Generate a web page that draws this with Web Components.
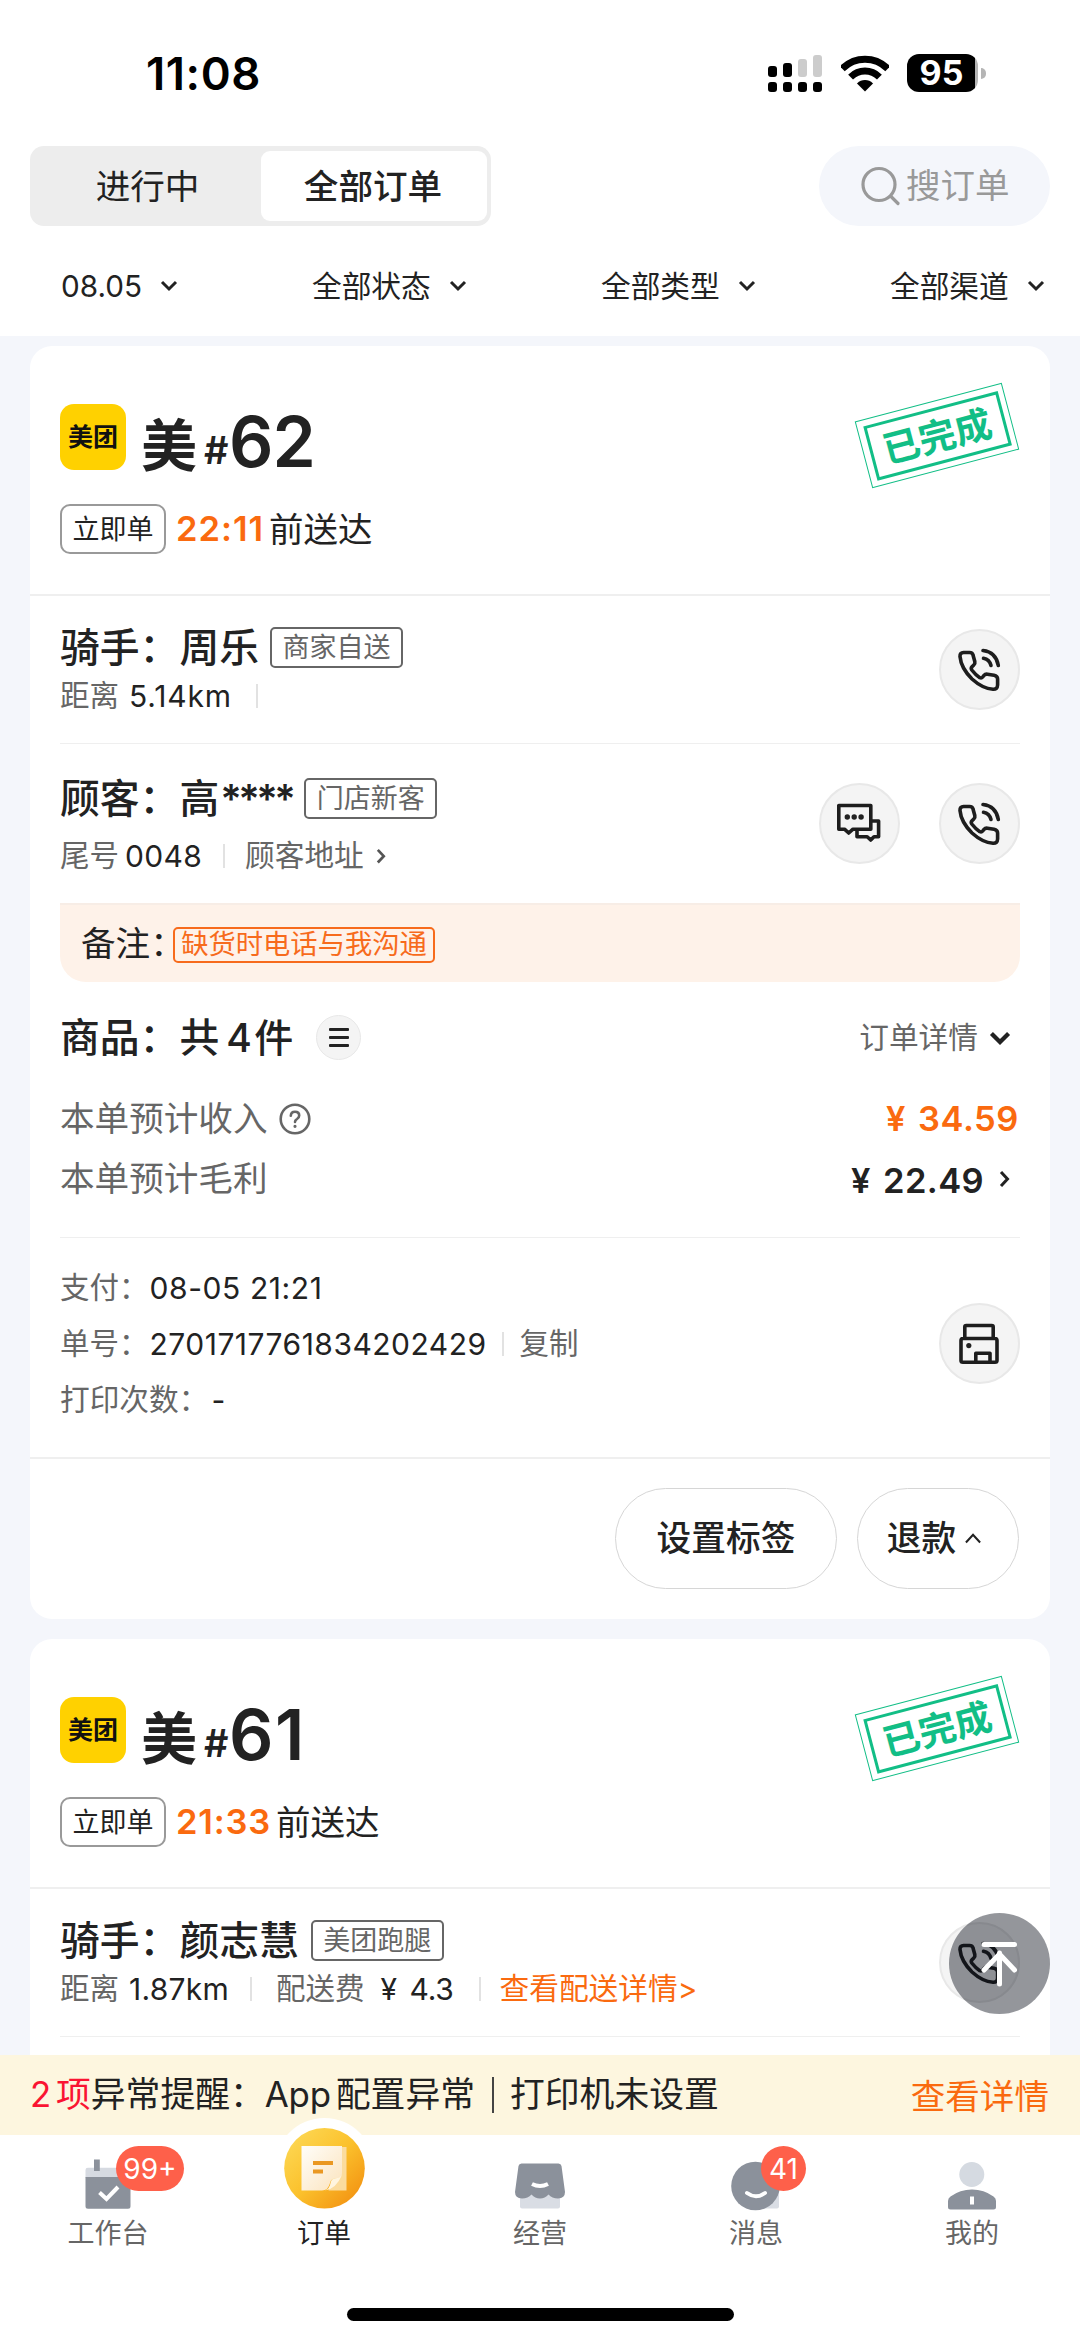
<!DOCTYPE html>
<html lang="zh-CN">
<head>
<meta charset="utf-8">
<title>订单</title>
<style>
html,body{margin:0;padding:0}
body{width:1080px;height:2341px;overflow:hidden;background:#fff;color:#222;font-family:Inter,"Noto Sans CJK SC",sans-serif}
</style>
</head>
<body>
<order-app></order-app>
<script>
const define = (name, html, setup) => customElements.define(name, class extends HTMLElement {
  constructor() {
    super();
    this.attachShadow({ mode: 'open' });
  }
  connectedCallback() {
    if (this.ready) return;
    this.ready = true;
    this.shadowRoot.innerHTML = typeof html === 'function' ? html(this) : html;
    if (setup) setup(this);
  }
});

/* Text run: s = font size, w = run width, x = gap before, c = colour, b = weight, y = baseline nudge */
define('t-x', el => {
  const a = n => el.getAttribute(n);
  return `<style>
  :host{display:block;flex:none;white-space:pre;line-height:1.2;
    ${a('s') ? `font-size:${a('s')}px;` : ''}${a('x') ? `margin-left:${a('x')}px;` : ''}
    ${a('c') ? `color:${a('c')};` : ''}${a('b') ? `font-weight:${a('b')};` : ''}
    ${a('y') ? `margin-top:${a('y')}px;` : ''}${a('w') ? `width:${a('w')}px;` : ''}}
  </style><span><slot></slot></span>`;
}, el => {
  const w = +el.getAttribute('w');
  if (!w) return;
  const span = el.shadowRoot.querySelector('span');
  const n = [...el.textContent].length;
  const natural = span.getBoundingClientRect().width;
  if (natural) span.style.letterSpacing = ((w - natural) / n).toFixed(3) + 'px';
});

define('v-sep', el => `<style>:host{display:block;flex:none;width:2px;height:24px;background:#e2e2e2;margin-left:${el.getAttribute('x') || 0}px}</style>`);

define('chev-icon', el => {
  const d = { down: 'M2 2L9 9L16 2', right: 'M2 2L8.5 9L2 16', up: 'M1 10L8.5 2L16 10' }[el.getAttribute('dir')];
  const w = el.getAttribute('w') || 17, sw = el.getAttribute('sw') || 3;
  const box = el.getAttribute('dir') === 'right' ? [11, 18] : [18, 12];
  return `<style>:host{display:block;flex:none;margin-left:${el.getAttribute('x') || 0}px}svg{display:block}</style>
  <svg width="${w}" height="${w * box[1] / box[0]}" viewBox="0 0 ${box[0]} ${box[1]}" fill="none" stroke="${el.getAttribute('c') || '#222'}" stroke-width="${sw}"><path d="${d}"/></svg>`;
});

define('status-bar', `<style>
:host{display:flex;height:146px;box-sizing:border-box;padding:45px 94px 0 146px;justify-content:space-between;align-items:flex-start;color:#000}
.r{display:flex;align-items:center;height:56px}
svg{display:block}
.bat{margin-left:18px;width:71px;height:38px;border-radius:12px;background:linear-gradient(90deg,#000 68px,#b5b5b5 68px);display:flex;align-items:center;justify-content:center;color:#fff;font-weight:700;font-size:34px;line-height:38px}
.bat span{margin-right:2px}
.nub{width:5px;height:11px;margin-left:3px;background:#b5b5b5;border-radius:0 5px 5px 0}
</style>
<t-x s="45.5" b="600" w="115" y="2">11:08</t-x>
<div class="r">
<svg width="56" height="38" viewBox="0 0 56 38"><g><rect y="12" width="9" height="11" rx="3"/><rect x="15" y="9" width="9" height="14" rx="3"/><rect x="30" y="5" width="9" height="18" rx="3" fill="#ccc"/><rect x="45" y="1" width="9" height="22" rx="3" fill="#ccc"/><rect y="28" width="9" height="10" rx="3"/><rect x="15" y="28" width="9" height="10" rx="3"/><rect x="30" y="28" width="9" height="10" rx="3"/><rect x="45" y="28" width="9" height="10" rx="3"/></g></svg>
<svg style="margin-left:17px" width="48" height="38" viewBox="0 0 48 38"><clipPath id="w"><path d="M24 37.5L-1 12.5V0H49V12.5Z"/></clipPath><g clip-path="url(#w)"><circle cx="24" cy="37" r="31.8" fill="none" stroke="#000" stroke-width="7"/><circle cx="24" cy="37" r="20" fill="none" stroke="#000" stroke-width="7"/><circle cx="24" cy="37" r="11"/></g></svg>
<div class="bat"><span>95</span></div><div class="nub"></div>
</div>`);

define('segment-tabs', `<style>
:host{display:flex;width:461px;height:80px;box-sizing:border-box;background:#ededed;border-radius:14px;padding:5px 4px 5px 0;font-size:34.6px}
div{display:flex;align-items:center;justify-content:center;padding-top:1px;box-sizing:border-box}
.a{width:231px;padding-left:4px}.b{width:226px;background:#fff;border-radius:9px;font-weight:500;padding-right:2px}
</style><div class="a"><slot name="off"></slot></div><div class="b"><slot name="on"></slot></div>`);

define('search-pill', `<style>
:host{display:flex;align-items:center;width:231px;height:80px;box-sizing:border-box;padding-left:42px;border-radius:41px;background:#f4f6fb;color:#999}
svg{display:block}
</style><svg width="40" height="40" viewBox="0 0 40 40" fill="none" stroke="#999" stroke-width="3.2" stroke-linecap="round"><circle cx="18" cy="18.5" r="16"/><path d="M30 30.5L37 37.5"/></svg><t-x s="34.5" x="5"><slot></slot></t-x>`);

define('filter-item', `<style>:host{display:flex;align-items:center}</style><t-x s="29.7"><slot></slot></t-x><chev-icon dir="down" x="18" w="18"></chev-icon>`);

define('tag-box', el => {
  const k = { soft: 'height:50px;padding:0 10.5px;border:2px solid #999;border-radius:10px;color:#222', plain: 'height:41px;padding:0 10.5px;border:2px solid #666;border-radius:5px;color:#666;margin-top:-2px', warn: 'height:36px;padding:0 6px;border:2px solid #f76b1c;border-radius:5px;color:#f76b1c;font-size:27.3px;margin-top:2px' }[el.getAttribute('kind')];
  return `<style>:host{display:flex;flex:none;align-items:center;box-sizing:border-box;font-size:27px;line-height:1;white-space:nowrap;${k};margin-left:${el.getAttribute('x') || 0}px}</style><slot></slot>`;
});

const glyphs = {
  phone: '<path d="M24.5 23.5H30.5Q33.5 23.5 34 26L35.8 32.5Q36.3 34.6 34.8 36L33 37.8Q31.6 39.3 32.8 41Q36.8 46.200 40.8 48.700Q42.5 49.500 43.700 48L45 46.300Q46.200 44.900 48.500 45.200L55 46.200Q58.600 47 58.600 50V56Q58.400 60.600 54 60.300Q43.500 59.500 33 50Q22 39 21 27.500Q20.900 23.500 24.500 23.500Z"/><path d="M44 21.500Q57 23 59.300 36.500M44.500 29.300Q50.500 30.500 52 36.500"/>',
  chat: '<path d="M19.800 22.500H51.800V46.200H34L29.700 50L25.500 46.200H19.800ZM51.800 38H59.600V53.700H55L51.700 57L48.200 53.700H38V46.500"/><g fill="#222" stroke="none"><circle cx="28.300" cy="34" r="2.700"/><circle cx="35.200" cy="34" r="2.700"/><circle cx="42.100" cy="34" r="2.700"/></g>',
  print: '<path d="M25.800 35.500V24Q25.800 22.500 27.300 22.500H52.700Q54.200 22.500 54.200 24V35.500M24 35.500H56Q58 35.500 58 37.500V57.500Q58 59.300 56 59.300H24Q22 59.300 22 57.500V37.500Q22 35.500 24 35.500ZM36.800 59V50.300H51V59"/><circle cx="29.800" cy="42.600" r="2.600" fill="#222" stroke="none"/>'
};
define('round-button', el => `<style>:host{display:block;flex:none;box-sizing:border-box;width:81px;height:81px;border-radius:50%;background:#f4f4f4;border:2px solid #e8e8e8;margin-left:${el.getAttribute('x') || 0}px}svg{display:block;margin:-2px}</style>
<svg width="81" height="81" viewBox="0 0 81 81" fill="none" stroke="#1d1d1d" stroke-width="3.600" stroke-linecap="round" stroke-linejoin="round">${glyphs[el.getAttribute('icon')]}</svg>`);

define('stamp-badge', `<style>
:host{display:block;flex:none;width:152px;height:69px;transform:rotate(-14.75deg);box-sizing:border-box;border:1.500px solid #12be86;padding:5.500px;color:#12be86}
div{box-sizing:border-box;height:100%;border:3px solid #12be86;display:flex;align-items:center;justify-content:center;font-size:37px;font-weight:600;line-height:1;padding-top:1px}
</style><div><slot></slot></div>`);

define('order-card', `<style>
:host{display:block;background:#fff;border-radius:22px;width:1020px;flex:none}
.head{display:flex;justify-content:space-between;height:250px;box-sizing:border-box;border-bottom:2px solid #efefef;padding:54px 37px 0 30px}
.title{display:flex;height:66px;margin-top:4px}
.logo{width:66px;height:66px;border-radius:14px;background:#ffd100;display:flex;align-items:center;justify-content:center;font-size:25px;font-weight:600;color:#111;line-height:1}
.meta{display:flex;align-items:center;height:50px;margin-top:34px}
stamp-badge{margin-top:1px}
</style>
<div class="head"><div><div class="title"><div class="logo"><span>美团</span></div><slot name="title"></slot></div><div class="meta"><tag-box kind="soft">立即单</tag-box><slot name="meta"></slot></div></div><stamp-badge>已完成</stamp-badge></div>
<slot></slot>`);

/* Generic horizontal strip: h = height, top = gap above */
define('info-row', el => `<style>:host{display:flex;align-items:center;height:${el.getAttribute('h')}px;margin-top:${el.getAttribute('top') || 0}px}.end{margin-left:auto;display:flex;align-items:center}</style><slot></slot><div class="end"><slot name="end"></slot></div>`);

define('card-section', el => `<style>
:host{display:flex;box-sizing:border-box;margin:0 ${el.hasAttribute('full') ? 0 : 30}px;padding:0 ${el.hasAttribute('full') ? 30 : 0}px;height:${el.getAttribute('h')}px;${el.hasAttribute('line') ? `border-bottom:${el.getAttribute('line')}px solid #efefef` : ''}}
.main{flex:1;min-width:0}.side{display:flex;height:81px;margin-top:${el.getAttribute('side')}px}
</style><div class="main"><slot></slot></div><div class="side"><slot name="side"></slot></div>`);

define('remark-bar', `<style>:host{display:flex;align-items:center;margin:0 30px;height:79px;box-sizing:border-box;background:#fef2e9;border-top:2px solid #f7ede6;border-radius:0 0 26px 26px;padding-left:21px}</style><slot></slot>`);

define('menu-dot', `<style>:host{display:flex;flex-direction:column;align-items:center;justify-content:center;gap:4.800px;box-sizing:border-box;width:45px;height:45px;border-radius:50%;background:#f4f4f4;border:1px solid #e8e8e8;margin-left:23px;margin-top:-1px}i{display:block;width:20px;height:3px;background:#222;border-radius:1px}</style><i></i><i></i><i></i>`);

define('help-icon', `<style>:host{display:block;margin-left:12px}svg{display:block}</style><svg width="32" height="32" viewBox="0 0 32 32" fill="none" stroke="#666" stroke-width="2.600" stroke-linecap="round"><circle cx="16" cy="16" r="14.300"/><path d="M11.800 12.800Q12 8.800 16 8.800Q20.200 8.800 20.200 12.600Q20.200 14.600 18 16Q16 17.200 16 19"/><circle cx="16" cy="23.300" r="1" fill="#666" stroke-width="1.200"/></svg>`);

define('pill-button', el => `<style>:host{display:flex;align-items:center;justify-content:center;flex:none;box-sizing:border-box;width:${el.getAttribute('w')}px;height:101px;border:1.500px solid #d6d6d6;border-radius:51px;font-size:34.700px;font-weight:500;padding:1px ${el.getAttribute('pr') || 0}px 0 0}</style><slot></slot>`);

define('card-actions', `<style>:host{display:flex;justify-content:flex-end;gap:20px;padding:29px 31px 30px 0}</style><slot></slot>`);

define('top-button', `<style>:host{display:block;position:absolute;right:30px;bottom:41px;width:101px;height:101px;border-radius:50%;background:rgba(8,12,24,.43)}svg{display:block}</style>
<svg width="101" height="101" viewBox="0 0 101 101" fill="none" stroke="#fff" stroke-width="5" stroke-linecap="round"><path d="M35 31.500H65.500M50.500 71V40M35 57L50.500 41L65.500 57"/></svg>`);

define('alert-bar', `<style>:host{display:flex;align-items:center;height:80px;flex:none;background:#fdf6df;padding:0 31px 0 30px;font-size:34.800px}.end{margin-left:auto;margin-top:3px;color:#fa6a0f;font-size:34.600px}</style><slot></slot><div class="end"><slot name="end"></slot></div>`);

const tabIcons = {
  work: '<path fill="#d6dae1" d="M85.500 2170q0-2.300 2.300-2.300h40q2.500 0 2.500 2.300v8h-44.800z"/><path fill="#8b919b" d="M85.500 2177h45v29.200q0 2.500-2.500 2.500h-40q-2.500 0-2.500-2.500zM94 2159.500h5.800v11.500H94z"/><path d="M99.500 2192.500L106.500 2199L118 2187" fill="none" stroke="#fff" stroke-width="4"/>',
  order: '<defs><linearGradient id="g" x1="0" y1="0" x2="1" y2="1"><stop offset="0" stop-color="#fddc5c"/><stop offset=".5" stop-color="#fbc12c"/><stop offset="1" stop-color="#f1880c"/></linearGradient><linearGradient id="p" x1="0" y1="0" x2="1" y2="1"><stop offset="0" stop-color="#fffefa"/><stop offset="1" stop-color="#fbe3bd"/></linearGradient></defs><circle cx="108.500" cy="2168" r="50" fill="#fff"/><circle cx="108.500" cy="2168.300" r="40.300" fill="url(#g)"/><path d="M125 2147h5.500v43.500h-18z" fill="#fbdc9e"/><path d="M85.500 2146H126V2173Q126 2178 121 2178Q115 2178 114 2183Q112 2190.500 106 2190.500H85.500Z" fill="url(#p)"/><path d="M126 2175Q124 2178 119 2178.500Q115 2179 114.500 2184Q113 2189 109 2190.500Q120 2189 126 2175Z" fill="#fff5df"/><path d="M97 2163H117M97 2171.500H107" stroke="#ea9822" stroke-width="4"/>',
  shop: '<path fill="#d9dde4" d="M88 2190h40v16.500q0 2-2 2H90q-2 0-2-2z"/><path fill="#8b919b" d="M89.500 2163.500h37q2.500 0 3 2.500l3.500 26q0 6-7 6.500q-6 0-9.500-4q-3.500 4-8.500 4t-8.500-4q-3.500 4-9.500 4q-7-.5-7-6.500l3.500-26q.5-2.500 3-2.500z"/><path d="M100 2184q8 4 16 0" fill="none" stroke="#fff" stroke-width="4"/>',
  chat: '<path fill="#d9dde4" d="M108 2188h23v18.500q0 2-2 2h-21z"/><circle cx="107.500" cy="2186" r="24.300" fill="#8b919b"/><path d="M99 2193q9 6.500 18 0" fill="none" stroke="#fff" stroke-width="4" stroke-linecap="round"/>',
  me: '<circle cx="107.800" cy="2174.500" r="12.500" fill="#d5dae1"/><path fill="#8b919b" d="M84 2201q0-3 2.500-4.500Q96 2189.500 108 2189.500T129.500 2196.500q2.500 1.500 2.500 4.500v6q0 2.500-2.500 2.500h-43q-2.500 0-2.500-2.500z"/><path fill="#fff" d="M106 2196.500h4v8h-4z"/>'
};
define('tab-item', el => {
  const on = el.hasAttribute('active'), badge = el.getAttribute('badge');
  return `<style>:host{display:flex;flex-direction:column;align-items:center;position:relative;width:216px;height:150px;font-size:27px;color:${on ? '#222' : '#666'}}
  svg{display:block;overflow:visible}b{position:absolute;top:11px;left:${el.getAttribute('bx')}px;width:${el.getAttribute('bw')}px;height:45px;border-radius:23px;background:#fe604a;color:#fff;display:flex;align-items:center;justify-content:center;font-weight:400;font-size:28px;line-height:1}
  .l{margin-top:4px;line-height:30px}</style>
  <svg width="216" height="80" viewBox="0 2135 216 80">${tabIcons[el.getAttribute('icon')]}</svg>${badge ? `<b><span>${badge}</span></b>` : ''}<div class="l"><slot></slot></div>`;
});

define('tab-bar', `<style>:host{display:flex;flex-direction:column;height:206px;flex:none;background:#fff;align-items:center}.row{display:flex;height:173px}.home{width:387px;height:13px;border-radius:7px;background:#000}</style><div class="row"><slot></slot></div><div class="home"></div>`);

define('order-app', `<style>
:host{display:flex;flex-direction:column;width:1080px;height:2341px;background:#fff}
.top{display:flex;justify-content:space-between;padding:0 30px;flex:none}
.filters{display:grid;grid-template-columns:251px 289px 289px auto;padding:11px 0 0 61px;align-items:center;flex:none;box-sizing:border-box;height:110px}
.list{flex:1;min-height:0;position:relative;overflow:hidden;background:#f4f6fb;padding:10px 30px 0;display:flex;flex-direction:column;gap:20px}
</style>
<status-bar></status-bar>
<div class="top"><segment-tabs><t-x slot="off">进行中</t-x><t-x slot="on">全部订单</t-x></segment-tabs><search-pill>搜订单</search-pill></div>
<div class="filters"><filter-item>08.05</filter-item><filter-item>全部状态</filter-item><filter-item>全部类型</filter-item><filter-item>全部渠道</filter-item></div>
<div class="list">
 <order-card>
  <t-x slot="title" s="56" b="700" x="15" y="9">美</t-x><t-x slot="title" s="38" b="600" x="7" w="25" y="24">#</t-x><t-x slot="title" s="69.5" b="600" w="86" x="0" y="-3">62</t-x>
  <t-x slot="meta" s="34.5" b="600" c="#fa6a0f" x="10" w="88">22:11</t-x><t-x slot="meta" s="34.5" x="5" y="1">前送达</t-x>
  <card-section h="148" line="1" side="33">
   <info-row h="46" top="29"><t-x s="39.8" b="500">骑手：周乐</t-x><tag-box kind="plain" x="11">商家自送</tag-box></info-row>
   <info-row h="40" top="5"><t-x s="29.5" c="#666">距离</t-x><t-x s="30" x="10" w="103">5.14km</t-x><v-sep x="24"></v-sep></info-row>
   <round-button slot="side" icon="phone"></round-button>
  </card-section>
  <card-section h="159" side="39">
   <info-row h="46" top="32"><t-x s="39.8" b="500">顾客：高</t-x><t-x s="40" b="600" w="72" x="1">****</t-x><tag-box kind="plain" x="12">门店新客</tag-box></info-row>
   <info-row h="40" top="14"><t-x s="29.5" c="#666">尾号</t-x><t-x s="30" x="6" w="77">0048</t-x><v-sep x="21"></v-sep><t-x s="29.7" c="#666" x="20">顾客地址</t-x><chev-icon dir="right" x="12" w="10" c="#555"></chev-icon></info-row>
   <round-button slot="side" icon="chat"></round-button><round-button slot="side" icon="phone" x="39"></round-button>
  </card-section>
  <remark-bar><t-x s="34.6">备注</t-x><t-x s="34.6" w="23" x="0">：</t-x><tag-box kind="warn">缺货时电话与我沟通</tag-box></remark-bar>
  <card-section h="256" line="1">
   <info-row h="46" top="33"><t-x s="39.8" b="500">商品：共</t-x><t-x s="39" b="500" x="7" w="28">4</t-x><t-x s="39" b="500" x="0">件</t-x><menu-dot></menu-dot>
     <t-x slot="end" s="29.7" c="#666">订单详情</t-x><chev-icon slot="end" dir="down" x="11" w="22" sw="3.5"></chev-icon><t-x slot="end" w="9"> </t-x></info-row>
   <info-row h="44" top="36"><t-x s="34.6" c="#666">本单预计收入</t-x><help-icon></help-icon><t-x slot="end" s="34.5" b="600" c="#fa6a0f" w="24">¥</t-x><t-x slot="end" s="34.5" b="600" c="#fa6a0f" x="8" w="101">34.59</t-x><t-x slot="end" w="1"> </t-x></info-row>
   <info-row h="44" top="16"><t-x s="34.6" c="#666">本单预计毛利</t-x><t-x slot="end" s="34.5" b="600" w="24" y="3">¥</t-x><t-x slot="end" s="34.5" b="600" x="8" w="101" y="3">22.49</t-x><chev-icon slot="end" dir="right" x="15" w="11"></chev-icon><t-x slot="end" w="10"> </t-x></info-row>
  </card-section>
  <card-section h="219" side="65">
   <info-row h="40" top="30"><t-x s="29.5" c="#666">支付：</t-x><t-x s="30" w="173" x="1">08-05 21:21</t-x></info-row>
   <info-row h="40" top="16"><t-x s="29.5" c="#666">单号：</t-x><t-x s="30" w="337" x="1">2701717761834202429</t-x><v-sep x="15"></v-sep><t-x s="29.5" c="#666" x="16">复制</t-x></info-row>
   <info-row h="40" top="16"><t-x s="29.7" c="#666">打印次数：</t-x><t-x s="30" x="3">-</t-x></info-row>
   <round-button slot="side" icon="print"></round-button>
  </card-section>
  <card-section h="2" full line="2"></card-section>
  <card-actions><pill-button w="222"><t-x>设置标签</t-x></pill-button><pill-button w="162" pr="7"><t-x>退款</t-x><chev-icon dir="up" x="9" w="17" sw="2.2"></chev-icon></pill-button></card-actions>
 </order-card>
 <order-card>
  <t-x slot="title" s="56" b="700" x="15" y="9">美</t-x><t-x slot="title" s="38" b="600" x="7" w="25" y="24">#</t-x><t-x slot="title" s="69.5" b="600" w="77" x="0" y="-3">61</t-x>
  <t-x slot="meta" s="34.5" b="600" c="#fa6a0f" x="10" w="95">21:33</t-x><t-x slot="meta" s="34.5" x="5" y="1">前送达</t-x>
  <card-section h="148" line="1" side="33">
   <info-row h="46" top="29"><t-x s="39.8" b="500">骑手：颜志慧</t-x><tag-box kind="plain" x="12">美团跑腿</tag-box></info-row>
   <info-row h="40" top="5"><t-x s="29.5" c="#666">距离</t-x><t-x s="30" x="10" w="100">1.87km</t-x><v-sep x="21"></v-sep><t-x s="29.5" c="#666" x="24">配送费</t-x><t-x s="30" x="16" w="24">¥</t-x><t-x s="30" x="5" w="44">4.3</t-x><v-sep x="25"></v-sep><t-x s="29.7" c="#fa6a0f" x="19">查看配送详情</t-x><t-x s="29.5" c="#fa6a0f" w="20">&gt;</t-x></info-row>
   <round-button slot="side" icon="phone"></round-button>
  </card-section>
  <card-section h="159"></card-section>
 </order-card>
 <top-button></top-button>
</div>
<alert-bar><t-x c="#fa1432" w="26">2</t-x><t-x c="#fa1432">项</t-x><t-x x="0">异常提醒：</t-x><t-x w="66">App</t-x><t-x x="5">配置异常</t-x><v-sep style="height:36px;background:#444;margin:0 16px 0 17px"></v-sep><t-x>打印机未设置</t-x><t-x slot="end">查看详情</t-x></alert-bar>
<tab-bar><tab-item icon="work" badge="99+" bx="116" bw="68">工作台</tab-item><tab-item icon="order" active>订单</tab-item><tab-item icon="shop">经营</tab-item><tab-item icon="chat" badge="41" bx="113" bw="45">消息</tab-item><tab-item icon="me">我的</tab-item></tab-bar>`);
</script>
</body>
</html>
